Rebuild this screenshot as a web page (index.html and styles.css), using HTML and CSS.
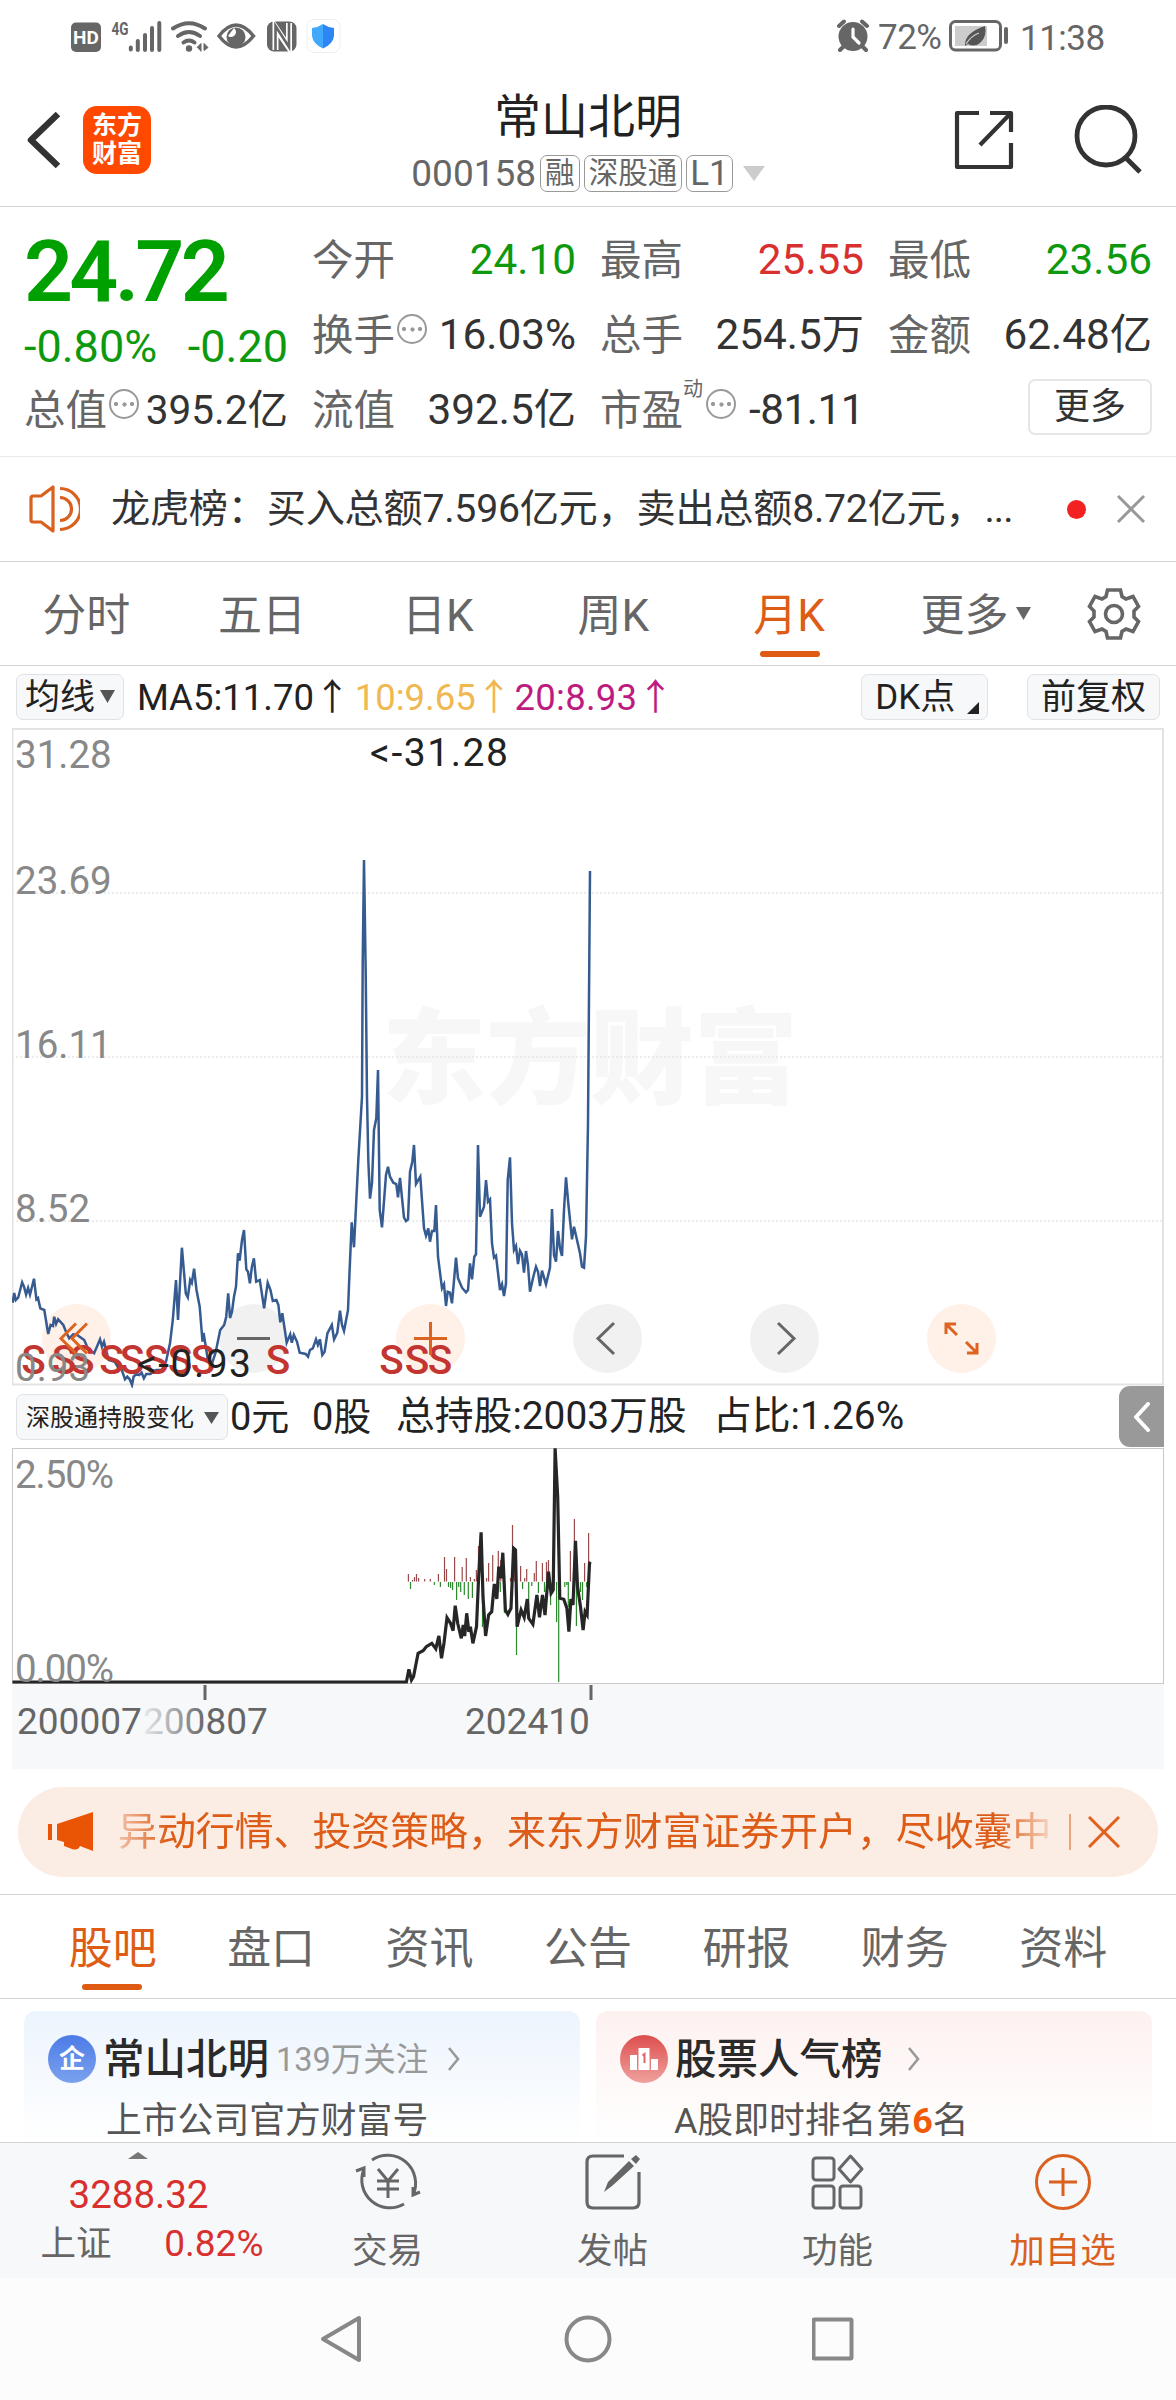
FILE: index.html
```html
<!DOCTYPE html>
<html lang="zh-CN">

<head>
    <meta charset="UTF-8">
    <meta name="viewport" content="width=device-width, initial-scale=1.0">
    <title>常山北明 000158</title>
    <link rel="stylesheet" href="styles.css">
</head>

<body>
    <!-- Status bar -->
    <div class="status">
        <svg class="status-icons" viewBox="70 18 272 36">
            <rect x="71" y="22.500" width="30" height="29.500" rx="5" fill="#666" />
            <text x="86" y="44" class="st-hd">HD</text>
            <text x="111.500" y="35" class="st-4g" textLength="17" lengthAdjust="spacingAndGlyphs">4G</text>
            <path d="M130.800 47.500v2M137.800 41v9M145 35v15M152 28v22M159.300 23v27" stroke="#666" stroke-width="4" stroke-linecap="round" />
            <g fill="none" stroke="#666" stroke-width="4" stroke-linecap="round">
                <path d="M173 28.500Q189 18 205 28.500" />
                <path d="M178 36Q189 28 200 36" />
                <path d="M183.500 42.500Q189 38.500 194.500 42.500" />
            </g>
            <circle cx="189" cy="48.500" r="3.200" fill="#666" />
            <path d="M197 47.500l4-4v8M204 43.500l4 4-4 3z" fill="#666" stroke="#666" stroke-width="1" />
            <path d="M219 36Q236 14 253.500 36Q236 58 219 36Z" fill="none" stroke="#666" stroke-width="3.500" />
            <circle cx="236" cy="37" r="9.500" fill="#666" />
            <path d="M228 36a5 5 0 0 0 6-8z" fill="#fff" />
            <rect x="267" y="21.500" width="29.500" height="30" rx="7" fill="#666" />
            <path d="M275.500 50V27.500L289 47.500V23" fill="none" stroke="#fff" stroke-width="6" />
            <path d="M275.500 50V26L289 47V23" fill="none" stroke="#666" stroke-width="2.600" />
            <rect x="307" y="19.500" width="33" height="33" rx="7" fill="#fff" stroke="#eee" />
            <path d="M323 24q5 3.500 11 4v8q-1 8-11 12.500z" fill="#2e86f5" />
            <path d="M323 24q-5 3.500-11 4v8q1 8 11 12.500z" fill="#41a9fb" />
        </svg>
        <svg class="status-alarm" viewBox="836 20 34 34">
            <circle cx="853" cy="37.500" r="14.500" fill="#666" />
            <path d="M839 27l5-4.500M867 27l-5-4.500M843 48l-3 3M863 48l3 3" stroke="#666" stroke-width="4" stroke-linecap="round" />
            <path d="M853 30v8l6 6" fill="none" stroke="#fff" stroke-width="3.200" stroke-linecap="round" />
        </svg>
        <span class="status-battery-text">72%</span>
        <svg class="status-battery" viewBox="948 20 62 34">
            <rect x="950.500" y="22.500" width="50" height="28.500" rx="5" fill="none" stroke="#666" stroke-width="3" />
            <rect x="955" y="27" width="32" height="20" fill="#ccc" />
            <path d="M985 27q2 10-4 16t-13 2q-2 1-3 2q-1-13 20-20z" fill="#555" />
            <path d="M966 45q5-8 13-11" fill="none" stroke="#ccc" stroke-width="1.300" />
            <path d="M1006 30v13" stroke="#666" stroke-width="4" stroke-linecap="round" />
        </svg>
        <span class="status-time">11:38</span>
    </div>

    <!-- Title bar -->
    <header class="header">
        <div class="header-left">
            <svg class="back" viewBox="0 0 34 58"><path d="M31 3L4 29L31 55" fill="none" stroke="#333" stroke-width="6.500" stroke-linejoin="round" /></svg>
            <div class="logo"><span>东方</span><span>财富</span></div>
        </div>
        <div class="header-title">
            <h1>常山北明</h1>
            <div class="code">
                <span>000158</span>
                <span class="tag">融</span>
                <span class="tag">深股通</span>
                <span class="tag tag-l1">L1</span>
                <svg width="22" height="15" viewBox="0 0 22 15"><path d="M0 0h22L11 15z" fill="#ccc" /></svg>
            </div>
        </div>
        <div class="header-right">
            <svg width="60" height="60" viewBox="0 0 60 60" fill="none" stroke="#333" stroke-width="4.200">
                <path d="M25 3H3V57H57V33M36 3H57V22M56 4L26 35" stroke-linejoin="round" />
            </svg>
            <svg width="70" height="70" viewBox="0 0 70 70" fill="none" stroke="#333" stroke-width="4.800">
                <circle cx="34" cy="31" r="29" />
                <path d="M54 53L68 67" />
            </svg>
        </div>
    </header>

    <!-- Quote -->
    <section class="quote">
        <div class="quote-main green">
            <div class="price">24.72</div>
            <div class="change"><span>-0.80%</span><span>-0.20</span></div>
        </div>
        <div class="cell"><label>今开</label><b class="green">24.10</b></div>
        <div class="cell"><label>最高</label><b class="red">25.55</b></div>
        <div class="cell"><label>最低</label><b class="green">23.56</b></div>
        <div class="cell"><label>换手</label><i class="info"></i><b>16.03%</b></div>
        <div class="cell"><label>总手</label><b>254.5万</b></div>
        <div class="cell"><label>金额</label><b>62.48亿</b></div>
        <div class="cell"><label>总值</label><i class="info"></i><b class="tight">395.2亿</b></div>
        <div class="cell"><label>流值</label><b>392.5亿</b></div>
        <div class="cell"><label>市盈<sup>动</sup></label><i class="info"></i><b class="pe">-81.11</b></div>
        <div class="cell cell-more"><button class="more">更多</button></div>
    </section>

    <!-- News line -->
    <div class="news">
        <svg width="52" height="48" viewBox="0 0 52 48" fill="none" stroke="#d9601f" stroke-width="3.200">
            <path d="M25 2V46L13 37H5Q3 37 3 35V13Q3 11 5 11H13Z" stroke-linejoin="round" />
            <path d="M32 3.500A20.500 20.500 0 0 1 32 44.500M32 12.500A11.500 11.500 0 0 1 32 35.500" />
        </svg>
        <p>龙虎榜：买入总额7.596亿元，卖出总额8.72亿元，<span>...</span></p>
        <i class="dot"></i>
        <svg class="close" width="30" height="30" viewBox="0 0 30 30"><path d="M2 2L28 28M28 2L2 28" stroke="#999" stroke-width="3" /></svg>
    </div>

    <!-- Period tabs -->
    <nav class="periods">
        <a>分时</a>
        <a>五日</a>
        <a>日K</a>
        <a>周K</a>
        <a class="active">月K</a>
        <a class="period-more">更多<svg width="15" height="13" viewBox="0 0 15 13"><path d="M0 0h15L7.500 13z" fill="#666" /></svg></a>
        <svg class="gear" width="54" height="54" viewBox="-27 -27 54 54" fill="none" stroke="#666" stroke-width="3.600">
            <path d="M-6.500 -24H6.500L8 -17.500L12 -15L19 -17.500L24.500 -7.500L20 -3V3L24.500 7.500L19 17.500L12 15L8 17.500L6.500 24H-6.500L-8 17.500L-12 15L-19 17.500L-24.500 7.500L-20 3V-3L-24.500 -7.500L-19 -17.500L-12 -15L-8 -17.500Z" />
            <circle r="8.500" />
        </svg>
    </nav>

    <!-- Moving averages -->
    <div class="ma">
        <button class="pill pill-ma">均线<svg width="15" height="13" viewBox="0 0 15 13"><path d="M0 0h15L7.500 13z" fill="#555" /></svg></button>
        <span class="ma5">MA5:11.70↑</span>
        <span class="ma10">10:9.65↑</span>
        <span class="ma20">20:8.93↑</span>
        <button class="pill pill-dk">DK点<svg width="12" height="12" viewBox="0 0 12 12"><path d="M12 0V12H0z" fill="#222" /></svg></button>
        <button class="pill pill-fq">前复权</button>
    </div>

    <!-- Monthly price chart -->
    <svg class="chart" viewBox="12 728 1152 660">
        <text x="382" y="1096" class="watermark">东方财富</text>
        <path d="M12 893H1163M12 1057H1163M12 1221H1163" stroke="#e6e6e6" stroke-width="1.500" stroke-dasharray="2 2" />
        <rect x="12.500" y="729" width="1150.500" height="655.500" fill="none" stroke="#e3e3e3" stroke-width="2" />
        <g fill="#fff0e8">
            <circle cx="76.500" cy="1338.500" r="34.500" />
            <circle cx="430.500" cy="1338.500" r="34.500" />
            <circle cx="961.500" cy="1338.500" r="34.500" />
        </g>
        <g fill="#f1f1f1">
            <circle cx="253.500" cy="1338.500" r="34.500" />
            <circle cx="607.500" cy="1338.500" r="34.500" />
            <circle cx="784.500" cy="1338.500" r="34.500" />
        </g>
        <polyline fill="none" stroke="#355b90" stroke-width="2.500" points="12.700,1302.700 14.200,1293 15.800,1300 18.200,1297.700 22.100,1282.300 24.100,1287 26.100,1294.700 28.100,1288 30,1294.700 34,1278.700 36.400,1299.300 38,1298 40.300,1308.300 44.300,1310 48.200,1334 50.600,1325 53,1326 54.200,1316.700 56.100,1324 58.100,1319.300 63.300,1325 66,1331.700 69.200,1338.300 73.200,1334.300 77.100,1335 84.200,1340 87.800,1348.300 94.100,1353.300 96.900,1346.700 100,1339.300 102,1346.700 104,1341.700 108.700,1360 114.700,1361.700 118.600,1368.300 121.800,1370 125,1379.300 127.300,1376.700 129.700,1379.300 132,1385 133.600,1376.700 136.400,1374 139.200,1375 141.600,1372.700 143.900,1378.300 146.300,1374 150.300,1374 156.200,1370 162,1370 166,1361.700 170,1343.300 172.800,1320 176,1280 178,1320 180,1283 181.900,1247.700 185.800,1293.300 187.800,1297.300 190.200,1280 191.800,1283 194.100,1268.700 196.500,1290 199.700,1306.700 202.500,1341.700 203.600,1333 207.600,1358 211.500,1365 215.500,1353 220.200,1330 224.200,1325 226.200,1316.700 228.200,1293.300 230,1318 232,1311.700 234,1296.700 236,1286.700 238,1253.300 239.600,1260.700 242,1240 244,1230 246.300,1269.300 248,1271.700 249.900,1283.300 251.900,1266.700 253.900,1258.300 256.200,1281.700 259.800,1280 264.100,1308.300 267.700,1282.700 270.500,1290 272.800,1301 276.400,1300 278.400,1305 280.300,1322.300 282.300,1313.300 286.700,1342.700 290.200,1334.300 291.800,1342.700 293.800,1335 297,1341.700 299.700,1352.700 305.700,1354 308,1356.700 310,1350 312.800,1348.300 316,1339.300 317.900,1345 319.900,1339.300 322.300,1355 324.600,1351.700 327.400,1333.300 331.800,1325 334.100,1339.300 337.300,1332.700 340,1310.700 342,1325 344,1331 348,1310 349.500,1273 351.700,1222.300 354,1247.300 358.300,1160 362,1096.700 362.700,963 364,860 365.700,973 367,1096.700 368.300,1160 370,1198.700 372,1183 374,1130 376.300,1118.300 378,1070 379.700,1210 382,1227.300 386,1175 388,1166.700 390,1176.700 393.300,1182.700 396.300,1184 398,1197.300 400,1178 404,1217.700 406,1221 408,1219.300 410,1171.700 412.300,1161.700 414,1145 416,1184 420.300,1176.700 424,1228.300 426,1235.700 428.300,1228.300 430,1241.700 432,1231 434.300,1231 436,1205 438,1256.700 442,1288.300 444,1284.300 446,1306 447.700,1291.700 450,1292.700 452,1303.300 456,1257.700 458,1278.300 462,1287.700 466,1292.300 468,1290 470,1263.300 472,1279.300 474.300,1256.700 476,1254.300 478,1145 480,1216.700 484,1206.700 486,1180 488,1201.700 490,1199.300 492,1243.300 494,1257.700 496,1255.700 500,1290 502,1284.300 504,1296 506,1283.300 507.700,1180 510,1157.300 512,1223.300 514,1250 516,1246 518,1264 520,1250.700 522,1254.300 524,1272.700 526,1251 528,1265 530,1291.700 533.300,1276.700 536,1266.700 538,1271.700 540,1286 542,1270.700 546,1284.300 550,1267.700 552,1209 554,1255 556,1261.700 558,1231 560,1248.300 562,1256 564,1210 566,1177.300 568.300,1203.300 572,1239.300 574,1226.700 580,1253.300 582,1266.700 584,1267.700 586,1236.700 588,1123 590,871" />
        <g class="s-mark">
            <text x="33.600" y="1374">S</text>
            <text x="64" y="1374">S</text>
            <text x="82.200" y="1374">S</text>
            <text x="111.500" y="1374">S</text>
            <text x="132" y="1374">S</text>
            <text x="156.200" y="1374">S</text>
            <text x="180" y="1374">S</text>
            <text x="203" y="1374">S</text>
            <text x="278" y="1374">S</text>
            <text x="391.500" y="1374">S</text>
            <text x="417" y="1374">S</text>
            <text x="440" y="1374">S</text>
        </g>
        <!-- zoom / pan buttons -->
        <g fill="none" stroke="#dd6420" stroke-width="3">
            <path d="M76 1323.500L61 1338.500L76 1353.500M87 1323.500L72 1338.500L87 1353.500" />
            <path d="M414 1338.500H447M430.500 1322V1355" />
            <path d="M946 1334V1324H956M947 1325L957 1335M977 1343V1353H967M976 1352L966 1342" />
        </g>
        <g fill="none" stroke="#666" stroke-width="3">
            <path d="M237 1338.500H270" />
            <path d="M614 1323L598 1338.500L614 1354" />
            <path d="M778 1323L794 1338.500L778 1354" />
        </g>
        <g class="axis-label">
            <text x="15" y="768">31.28</text>
            <text x="15" y="894">23.69</text>
            <text x="15" y="1058">16.11</text>
            <text x="15" y="1222">8.52</text>
            <text x="15" y="1381">0.93</text>
        </g>
        <g class="peak-label">
            <text x="370" y="766" textLength="138">&lt;-31.28</text>
            <text x="137" y="1377" textLength="114">&lt;-0.93</text>
        </g>
    </svg>

    <!-- Shareholding indicator -->
    <div class="holding">
        <button class="pill pill-hold">深股通持股变化<svg width="15" height="12" viewBox="0 0 15 12"><path d="M0 0h15L7.500 12z" fill="#555" /></svg></button>
        <span class="h1">0元</span>
        <span class="h2">0股</span>
        <span class="h3">总持股:2003万股</span>
        <span class="h4">占比:1.26%</span>
        <div class="handle"><svg width="18" height="30" viewBox="0 0 18 30"><path d="M15 2L3 15L15 28" fill="none" stroke="#fff" stroke-width="4" stroke-linecap="round" stroke-linejoin="round" /></svg></div>
    </div>
    <svg class="subchart" viewBox="12 1448 1152 236">
        <rect x="12.500" y="1448.500" width="1151" height="235" fill="none" stroke="#c8c8c8" />
        <path stroke="#9a4a4a" stroke-width="1.200" d="M408.400 1581.500V1574M412.500 1581.500V1580M414.500 1581.500V1577M416.500 1581.500V1574M418.600 1581.500V1578M424.700 1581.500V1579M430.300 1581.500V1579M438.400 1581.500V1574M444.500 1581.500V1557M446.500 1581.500V1569M454.600 1581.500V1557M462.200 1581.500V1567M466.300 1581.500V1558M470.400 1581.500V1577M474.400 1581.500V1579M476.400 1581.500V1570M478.500 1581.500V1546M486.600 1581.500V1578M488.600 1581.500V1563M492.700 1581.500V1555M498.300 1581.500V1551M500.800 1581.500V1560M510.500 1581.500V1578M512.500 1581.500V1525M514.500 1581.500V1547M520.600 1581.500V1566M524.700 1581.500V1578M526.700 1581.500V1569M534.300 1581.500V1573M536.300 1581.500V1561M542.400 1581.500V1563M546.500 1581.500V1562M548.500 1581.500V1560M570.400 1581.500V1551M574.400 1581.500V1519M584.600 1581.500V1563M588.600 1581.500V1533" />
        <path stroke="#2c8a2c" stroke-width="1.200" d="M410.500 1582V1589M434.300 1582V1585M440.400 1582V1587M448.500 1582V1587M450.600 1582V1588M452.600 1582V1590M456.600 1582V1600M458.700 1582V1587M460.700 1582V1592M464.300 1582V1595M468.300 1582V1599M472.400 1582V1598M482.500 1582V1627M500.300 1582V1592M504.400 1582V1613M516.500 1582V1655M522.600 1582V1589M528.700 1582V1607M531.800 1582V1586M538.400 1582V1593M544.500 1582V1592M550.600 1582V1605M556.600 1582V1622M558.700 1582V1682M564.800 1582V1587M566.800 1582V1585M568.300 1582V1607M576.400 1582V1626M580.500 1582V1592M582.500 1582V1600M586.600 1582V1587" />
        <polyline fill="none" stroke="#262626" stroke-width="3.200" points="12.500,1682 406.400,1682 408.900,1669.300 411.500,1680 413.500,1676.700 418.100,1653.300 423.100,1650.700 426.300,1646.700 431.800,1643.300 435.800,1648.700 438.900,1636 441.500,1658.300 444,1643 447,1617.700 450.500,1623.300 453.100,1630.700 455.200,1605.700 457.700,1623.300 461.300,1638.300 463.200,1625 464.700,1636 466.700,1613.300 468.800,1631.700 470.400,1626.700 472.900,1643.300 476.500,1626.700 478.500,1580 481.100,1532.300 483,1596.700 485.600,1636 488.600,1615 491.700,1611.700 494.300,1584 496.800,1599 498.800,1566.700 500.900,1578.300 502.800,1552.700 505.400,1610 507.900,1614.300 511,1608.300 513.600,1548.300 515.500,1550 517.100,1626.700 521.100,1610 524.200,1617.300 527.300,1599 528.700,1618.300 532.900,1624.300 536.900,1595 539.500,1617.300 542.500,1595 545,1615 548.500,1571.700 551.100,1593.300 553.200,1590 555.100,1448.300 557.700,1496.700 559.800,1598.300 563.800,1599.300 566.900,1608.300 568.900,1631.700 570.900,1599 573,1605 575.500,1540.700 577.500,1586.700 580.500,1606.700 583.100,1630 585.100,1611.700 587.100,1615 589.500,1563.300 590.500,1562" />
        <g class="axis-label">
            <text x="15" y="1488" textLength="99">2.50%</text>
            <text x="15" y="1682" textLength="99">0.00%</text>
        </g>
    </svg>
    <svg class="timeline" viewBox="12 1684 1152 85">
        <defs>
            <linearGradient id="fade" gradientUnits="userSpaceOnUse" x1="142" y1="0" x2="206" y2="0">
                <stop offset="0" stop-color="#666" stop-opacity="0.080" />
                <stop offset="1" stop-color="#666" />
            </linearGradient>
        </defs>
        <path d="M205 1685V1700M591 1685V1700" stroke="#666" stroke-width="3" />
        <text x="17" y="1734" fill="#666">200007</text>
        <text x="143" y="1734" fill="url(#fade)">200807</text>
        <text x="465" y="1734" fill="#666">202410</text>
    </svg>

    <!-- Promo banner -->
    <div class="banner">
        <svg width="46" height="40" viewBox="0 0 46 40" fill="#e95504">
            <path d="M0 12h4v16H0zM9 12L45 0V39L32 34Q30 39 24 37L16 34V30L9 28Z" />
        </svg>
        <p>异动行情、投资策略，来东方财富证券开户，尽收囊中</p>
        <i class="bar"></i>
        <svg width="32" height="32" viewBox="0 0 32 32"><path d="M1 1L31 31M31 1L1 31" stroke="#e0601c" stroke-width="3" /></svg>
    </div>

    <!-- Content tabs -->
    <nav class="tabs">
        <a class="active">股吧</a>
        <a>盘口</a>
        <a>资讯</a>
        <a>公告</a>
        <a>研报</a>
        <a>财务</a>
        <a>资料</a>
    </nav>

    <div class="cards">
        <div class="card card-blue">
            <div class="card-title">
                <span class="badge badge-blue">企</span>
                <strong>常山北明</strong>
                <small>139万关注</small>
                <svg width="14" height="26" viewBox="0 0 14 26"><path d="M2 2L11 13L2 24" fill="none" stroke="#999" stroke-width="2.600" /></svg>
            </div>
            <p>上市公司官方财富号</p>
        </div>
        <div class="card card-red">
            <div class="card-title">
                <span class="badge badge-red">
                    <svg width="28" height="24" viewBox="0 0 28 24"><path d="M0 8h7v15H0zM8.500 1h11v22h-11zM21 12h7v11h-7z" fill="#fff" /><path d="M12.500 8.500L14.500 7V16" fill="none" stroke="#e06563" stroke-width="2" /></svg>
                </span>
                <strong>股票人气榜</strong>
                <svg class="rank-arrow" width="14" height="26" viewBox="0 0 14 26"><path d="M2 2L11 13L2 24" fill="none" stroke="#999" stroke-width="2.600" /></svg>
            </div>
            <p>A股即时排名第<em>6</em>名</p>
        </div>
    </div>

    <!-- Bottom toolbar -->
    <footer class="toolbar">
        <div class="index">
            <svg width="20" height="7" viewBox="0 0 20 7"><path d="M10 0L20 7H0z" fill="#777" /></svg>
            <div class="index-value">3288.32</div>
            <div class="index-row"><span>上证</span><b>0.82%</b></div>
        </div>
        <div class="tool">
            <svg width="66" height="60" viewBox="0 0 66 60" fill="none" stroke="#666" stroke-width="3">
                <path d="M17 8A28 28 0 0 1 58 43M49 52A28 28 0 0 1 9 17M1 19L9 16V25M65 40L58 43V35" />
                <path d="M23 17L33 29L43 17M33 29V46M22 29H44M22 37H44" />
            </svg>
            <span>交易</span>
        </div>
        <div class="tool">
            <svg width="58" height="60" viewBox="0 0 58 60" fill="none" stroke="#666" stroke-width="3.200">
                <path d="M40 4H9Q3 4 3 10V50Q3 56 9 56H49Q55 56 55 50V20" />
                <path d="M20 40L24 30L45 9L50 14L28 34ZM47 7L52 3L56 7L52 12Z" fill="#666" stroke="none" />
            </svg>
            <span>发帖</span>
        </div>
        <div class="tool">
            <svg width="58" height="60" viewBox="0 0 58 60" fill="none" stroke="#666" stroke-width="3">
                <rect x="4" y="6" width="21" height="22" rx="3" />
                <rect x="4" y="34" width="21" height="22" rx="3" />
                <rect x="31" y="34" width="21" height="22" rx="3" />
                <path d="M41.500 4L53 17L41.500 30L30 17Z" stroke-linejoin="round" />
            </svg>
            <span>功能</span>
        </div>
        <div class="tool active">
            <svg width="58" height="60" viewBox="0 0 58 60" fill="none" stroke="#d9601f" stroke-width="3">
                <circle cx="29" cy="30" r="26.500" />
                <path d="M15 30H43M29 16V44" />
            </svg>
            <span>加自选</span>
        </div>
    </footer>

    <!-- System navigation -->
    <div class="sysnav">
        <svg width="44" height="48" viewBox="0 0 44 48"><path d="M39 3V45L3 24Z" /></svg>
        <svg width="48" height="48" viewBox="0 0 48 48"><circle cx="24" cy="24" r="21.500" /></svg>
        <svg width="44" height="48" viewBox="0 0 44 48"><rect x="1.500" y="4.500" width="38" height="39" rx="1" /></svg>
    </div>
</body>

</html>
```

FILE: styles.css
```css
* {
    box-sizing: border-box;
}

body {
    width: 1176px;
    height: 2400px;
    margin: 0;
    overflow: hidden;
    background: #fff;
    color: #333;
    font-family: Roboto, "Noto Sans CJK SC", sans-serif;
    font-size: 42px;
    line-height: 1;
}

svg {
    display: block;
    flex: none;
}

p,
h1 {
    margin: 0;
    font-weight: normal;
}

b,
i,
em {
    font-weight: normal;
    font-style: normal;
}

.green {
    color: #0d990d;
}

.red {
    color: #d8302f;
}

/* status bar */
.status {
    display: flex;
    align-items: center;
    height: 72px;
    padding-left: 70px;
    color: #666;
    font-size: 35px;
    white-space: nowrap;
}

.status-icons {
    width: 272px;
    height: 36px;
}

.st-hd {
    fill: #fff;
    font-size: 19px;
    font-weight: 700;
    text-anchor: middle;
}

.st-4g {
    fill: #666;
    font-size: 19px;
    font-weight: 700;
}

.status-alarm {
    width: 34px;
    height: 34px;
    margin-left: 494px;
}

.status-battery-text {
    width: 70px;
    margin-left: 8px;
    padding-top: 3px;
    letter-spacing: -0.5px;
}

.status-battery {
    width: 62px;
    height: 34px;
}

.status-time {
    margin-left: 10px;
    padding-top: 4px;
    letter-spacing: -0.5px;
}

/* header */
.header {
    display: flex;
    justify-content: space-between;
    height: 135px;
    padding: 0 34px 0 27px;
    border-bottom: 1px solid #d3d3d3;
}

.header-left,
.header-right {
    display: flex;
    align-items: center;
    width: 210px;
    padding-top: 1px;
}

.back {
    width: 34px;
    height: 58px;
}

.logo {
    display: flex;
    flex-direction: column;
    align-items: center;
    justify-content: center;
    gap: 3px;
    width: 68px;
    height: 68px;
    margin-left: 22px;
    border-radius: 14px;
    background: #ff4800;
    color: #fff;
    font-size: 25px;
    font-weight: 700;
}

.header-title {
    display: flex;
    flex-direction: column;
    align-items: center;
    padding: 21px 0 0 7px;
}

.header-title h1 {
    height: 48px;
    color: #222;
    font-size: 47px;
    line-height: 48px;
}

.code {
    display: flex;
    align-items: center;
    gap: 4px;
    height: 37px;
    margin-top: 14px;
    color: #666;
    font-size: 37px;
}

.code svg {
    margin-left: 6px;
}

.tag {
    height: 37px;
    padding: 0 4px;
    border: 1.5px solid #999;
    border-radius: 7px;
    font-size: 29.5px;
    line-height: 34px;
}

.tag-l1 {
    font-size: 35px;
    padding: 0 3px;
    line-height: 35px;
}

.header-right {
    justify-content: flex-end;
    gap: 58px;
}

/* quote */
.quote {
    display: grid;
    grid-template-columns: repeat(4, 264px);
    grid-auto-rows: 75px;
    gap: 0 24px;
    height: 250px;
    padding: 16px 24px 0;
    border-bottom: 1px solid #e9e9e9;
}

.quote-main {
    grid-row: span 2;
}

.price {
    height: 90px;
    padding-top: 3px;
    font-size: 86px;
    font-weight: 600;
    line-height: 92px;
    letter-spacing: -3.8px;
    color: #00a000;
}

.change {
    display: flex;
    justify-content: space-between;
    font-size: 45px;
    line-height: 67px;
}

.cell {
    display: flex;
    align-items: center;
    height: 75px;
    white-space: nowrap;
}

.cell label {
    position: relative;
    color: #666;
    font-size: 41.5px;
}

.cell b {
    margin-left: auto;
    font-size: 42.3px;
}

.cell b.tight {
    font-size: 40.5px;
}

.cell b.pe {
    letter-spacing: -0.5px;
}

.cell sup {
    position: absolute;
    left: 83px;
    top: -11px;
    font-size: 20px;
    line-height: 20px;
}

.cell label:has(sup) + .info {
    margin-left: 23px;
}

.info {
    width: 30px;
    height: 30px;
    margin: -13px 0 0 2px;
    border: 2px solid #999;
    border-radius: 50%;
    background: radial-gradient(circle, #999 1.8px, transparent 2.4px) center / 7px 7px no-repeat, radial-gradient(circle at 5px 13px, #999 1.8px, transparent 2.4px), radial-gradient(circle at 21px 13px, #999 1.8px, transparent 2.4px);
}

.cell-more {
    justify-content: flex-end;
}

.more {
    width: 124px;
    height: 56px;
    margin-top: -8px;
    padding: 0;
    border: 2px solid #e6e6e6;
    border-radius: 7px;
    background: #fff;
    color: #333;
    font-family: inherit;
    font-size: 36px;
    line-height: 50px;
}

/* news */
.news {
    display: flex;
    align-items: center;
    height: 105px;
    padding-left: 28px;
    border-bottom: 1px solid #d3d3d3;
    white-space: nowrap;
}

.news p {
    width: 900px;
    margin-left: 31px;
    padding-top: 2px;
    font-size: 39.2px;
    letter-spacing: -0.25px;
}

.news p span {
    letter-spacing: -1px;
}

.dot {
    width: 19px;
    height: 19px;
    margin-left: 56px;
    border-radius: 50%;
    background: #f22222;
}

.close {
    margin-left: 30px;
}

/* period tabs */
.periods {
    display: flex;
    align-items: center;
    height: 104px;
    border-bottom: 1px solid #d3d3d3;
    color: #666;
    font-size: 44px;
}

.periods a {
    position: relative;
    width: 175.7px;
    padding: 4px 3px 0 0;
    text-align: center;
}

.periods .active,
.tabs .active {
    color: #dd5d16;
}

.periods .active::after,
.tabs .active::after {
    content: "";
    position: absolute;
    left: 50%;
    bottom: -19px;
    width: 60px;
    height: 6px;
    margin-left: -31px;
    border-radius: 3px;
    background: #df5a13;
}

.periods .period-more {
    display: flex;
    align-items: center;
    gap: 8px;
    margin-left: 42px;
    width: 168px;
}

.period-more svg {
    margin-top: -4px;
}

.gear {
    margin-left: -1px;
}

/* moving averages */
.ma {
    display: flex;
    align-items: center;
    height: 62px;
    padding: 0 16px;
    color: #222;
    font-size: 36.5px;
    white-space: nowrap;
}

.ma span {
    padding-top: 3px;
}

.pill {
    display: flex;
    align-items: center;
    height: 46px;
    padding: 2px 0 0;
    border: 1.5px solid #e0e2e6;
    border-radius: 7px;
    background: #f7f8fa;
    color: #222;
    font-family: inherit;
    font-size: 35px;
    line-height: 42px;
}

.pill-ma {
    gap: 5px;
    width: 108px;
    padding-left: 8px;
}

.pill-ma svg {
    margin-top: -4px;
}

.ma5 {
    width: 218px;
    margin-left: 13px;
}

.ma10 {
    width: 160px;
    color: #f0b850;
}

.ma20 {
    width: 347px;
    color: #bd1b80;
    letter-spacing: 0.25px;
}

.pill-dk {
    gap: 12px;
    width: 127px;
    padding-left: 13px;
}

.pill-dk svg {
    margin-top: 20px;
}

.pill-fq {
    justify-content: center;
    width: 133px;
    margin-left: 39px;
}

/* charts */
.chart {
    width: 1152px;
    height: 660px;
    margin: 0 12px -3px;
}

.watermark {
    fill: #f7f7f7;
    font-size: 104px;
    font-weight: 900;
}

.axis-label {
    fill: #888;
    font-size: 38.5px;
}

.peak-label {
    fill: #222;
    font-size: 39px;
}

.s-mark {
    fill: #c23531;
    font-size: 40.5px;
    font-weight: 500;
    text-anchor: middle;
}

.holding {
    display: flex;
    align-items: center;
    height: 63px;
    padding: 0 12px 0 16px;
    color: #222;
    font-size: 38px;
    white-space: nowrap;
}

.pill-hold {
    gap: 10px;
    width: 212px;
    padding-left: 9px;
    font-size: 24px;
}

.holding .h1 {
    width: 82px;
    margin-left: 2px;
}

.holding .h2 {
    width: 84px;
}

.holding .h3 {
    width: 317px;
    font-size: 38.8px;
}

.holding .h4 {
    font-size: 38.8px;
}

.handle {
    display: flex;
    align-items: center;
    justify-content: center;
    width: 45px;
    height: 61px;
    margin-left: auto;
    border-radius: 11px 0 0 11px;
    background: #999;
}

.subchart {
    width: 1152px;
    height: 236px;
    margin: 0 12px;
}

.timeline {
    width: 1152px;
    height: 85px;
    margin: 0 12px;
    background: #f7f8fa;
    font-size: 37px;
}

/* banner */
.banner {
    display: flex;
    align-items: center;
    height: 90px;
    margin: 18px 18px 17px;
    padding-left: 30px;
    border-radius: 45px;
    background: #fcede4;
}

.banner p {
    width: 934px;
    margin-left: 24px;
    color: #dc5c18;
    font-size: 38.9px;
    line-height: 46px;
    white-space: nowrap;
    -webkit-mask-image: linear-gradient(90deg, rgba(0, 0, 0, 0.3), #000 50px, #000 880px, rgba(0, 0, 0, 0.15));
    mask-image: linear-gradient(90deg, rgba(0, 0, 0, 0.3), #000 50px, #000 880px, rgba(0, 0, 0, 0.15));
}

.bar {
    width: 2px;
    height: 36px;
    margin: 0 17px;
    background: #e9a37e;
}

/* content tabs */
.tabs {
    display: flex;
    align-items: center;
    height: 105px;
    padding: 0 33.5px;
    border-top: 1px solid #d3d3d3;
    border-bottom: 1px solid #d3d3d3;
    color: #666;
    font-size: 44px;
}

.tabs a {
    position: relative;
    flex: 1;
    padding-top: 4px;
    text-align: center;
}

/* cards */
.cards {
    display: grid;
    grid-template-columns: 556px 556px;
    gap: 16px;
    height: 143px;
    padding: 12px 24px 0;
    overflow: hidden;
}

.card {
    height: 131px;
    padding: 24px 24px 0;
    border-radius: 12px 12px 0 0;
}

.card-blue {
    background: linear-gradient(#ecf4fd, #ffffff);
}

.card-red {
    background: linear-gradient(#fdf1f0, #ffffff);
}

.card-title {
    display: flex;
    align-items: center;
    height: 48px;
}

.card-title strong {
    margin-left: 7px;
    padding-top: 2px;
    color: #2a2a2a;
    font-size: 41.5px;
    font-weight: 500;
}

.card-title small {
    width: 171px;
    margin-left: 7px;
    padding-top: 2px;
    color: #999;
    font-size: 32.5px;
}

.card p {
    padding: 18px 0 0 58px;
    color: #555;
    font-size: 35.8px;
    line-height: 40px;
}

.card-red p {
    padding-left: 54px;
}

.card em {
    color: #f05a0a;
    font-weight: 700;
}

.rank-arrow {
    margin-left: 24px;
}

.badge {
    display: flex;
    align-items: center;
    justify-content: center;
    width: 48px;
    height: 48px;
    border-radius: 50%;
    color: #fff;
    font-size: 26px;
    font-weight: 700;
}

.badge-blue {
    background: linear-gradient(#4c7be6, #7ba2ee);
}

.badge-red {
    background: linear-gradient(#dc4f4d, #f0a19e);
}

/* bottom toolbar */
.toolbar {
    display: flex;
    height: 136px;
    border-top: 1.5px solid #d3d3d3;
    background: #f7f8fa;
    color: #666;
    font-size: 35.5px;
}

.index {
    display: flex;
    flex-direction: column;
    align-items: center;
    width: 275px;
    padding-top: 9px;
}

.index-value {
    margin: 16px 0 0 2px;
    color: #d8302f;
    font-size: 38.5px;
    line-height: 40px;
}

.index-row {
    display: flex;
    justify-content: space-between;
    width: 223px;
    margin: 9px 0 0 29px;
    line-height: 40px;
}

.index-row b {
    color: #d8302f;
    font-size: 37px;
}

.tool {
    display: flex;
    flex-direction: column;
    align-items: center;
    width: 225px;
    padding-top: 9px;
}

.tool span {
    margin-top: 19px;
    line-height: 40px;
}

.tool.active {
    color: #d9601f;
}

/* system navigation */
.sysnav {
    display: flex;
    align-items: center;
    justify-content: center;
    gap: 200px;
    height: 122px;
    background: #fcfcfc;
}

.sysnav svg {
    fill: none;
    stroke: #888;
    stroke-width: 4;
    stroke-linejoin: round;
}
```
